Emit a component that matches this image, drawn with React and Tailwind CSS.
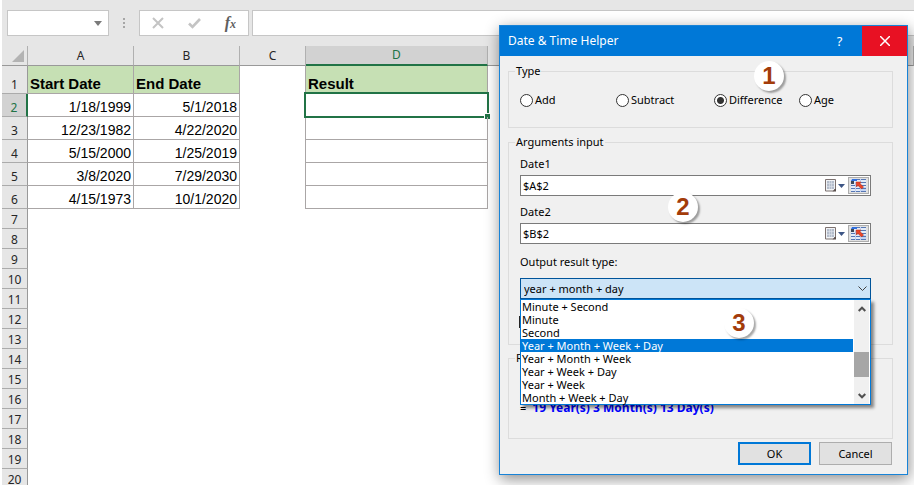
import { useState } from 'react';
import clsx from 'clsx';

const START_ROWS = [
    { start: '1/18/1999', end: '5/1/2018' },
    { start: '12/23/1982', end: '4/22/2020' },
    { start: '5/15/2000', end: '1/25/2019' },
    { start: '3/8/2020', end: '7/29/2030' },
    { start: '4/15/1973', end: '10/1/2020' },
];

const EMPTY_ROWS = [7, 8, 9, 10, 11, 12, 13, 14, 15, 16, 17, 18, 19, 20];

const TYPES = ['Add', 'Subtract', 'Difference', 'Age'];

const OUTPUT_TYPES = [
    'Minute + Second',
    'Minute',
    'Second',
    'Year + Month + Week + Day',
    'Year + Month + Week',
    'Year + Week + Day',
    'Year + Week',
    'Month + Week + Day',
];

const FormulaBar = () => (
    <div className="flex h-[46px] shrink-0 bg-[#e6e6e6] pt-[10px] pl-[5px]">
        <button aria-label="Name box" className="flex h-[26px] w-[102px] items-center justify-end border border-[#c6c6c6] bg-white pr-[6px]">
            <svg width="8" height="5" viewBox="0 0 8 5"><path d="M0 0h8L4 5z" fill="#7a7a7a" /></svg>
        </button>
        <div className="flex h-[26px] w-[30px] items-center justify-center">
            <svg width="2" height="10" viewBox="0 0 2 10" fill="#a6a6a6">
                <path d="M0 0h2v2H0zM0 4h2v2H0zM0 8h2v2H0z" />
            </svg>
        </div>
        <div className="flex h-[26px] w-[110px] items-center justify-between border border-[#c6c6c6] bg-white px-3">
            <button aria-label="Cancel entry">
                <svg width="12" height="12" viewBox="0 0 12 12" fill="none" stroke="#c4c4c4" strokeWidth="2">
                    <path d="M1 1l10 10M11 1L1 11" />
                </svg>
            </button>
            <button aria-label="Enter">
                <svg width="13" height="12" viewBox="0 0 13 12" fill="none" stroke="#c4c4c4" strokeWidth="2.600">
                    <path d="M1 6.500l3.500 3.500L12 2" />
                </svg>
            </button>
            <button className="font-['Liberation_Serif',serif] text-[16px] leading-4 font-bold text-[#5f5f5f] italic">
                f<span className="text-[12px]">x</span>
            </button>
        </div>
        <input aria-label="Formula" className="ml-[3px] h-[26px] min-w-0 flex-1 border border-r-0 border-[#c6c6c6] bg-white px-2 outline-none" />
    </div>
);

const RowHeader = ({ n, active }) => (
    <th
        scope="row"
        className={clsx(
            'border-b p-0 text-center align-bottom text-[12px] leading-4 font-normal',
            active
                ? 'border-r-2 border-r-[#217346] border-b-[#ababab] bg-[#d2d2d2] text-[#217346]'
                : 'border-r border-r-[#999999] border-b-[#ababab] bg-[#e6e6e6] text-[#262626]'
        )}
    >
        {n}
    </th>
);

const ColumnHeader = ({ name, active }) => (
    <th
        scope="col"
        className={clsx(
            'border-r border-r-[#b0b0b0] p-0 text-center text-[12px] leading-[18px] font-normal',
            active ? 'border-b-2 border-b-[#217346] bg-[#d2d2d2] text-[#217346]' : 'border-b border-b-[#999999] text-[#262626]'
        )}
    >
        {name}
    </th>
);

const Sheet = () => {
    const line = 'border-r border-b border-[#aaa6a6]';
    const date = 'px-[2px] py-0 text-right align-bottom text-[14px] leading-[18px]';
    const title = 'bg-[#c6e0b4] px-[2px] py-0 text-left align-bottom font-bold leading-[18px]';

    return (
        <table className="w-full table-fixed border-separate border-spacing-0 font-['Liberation_Sans',Arial,sans-serif] text-[15px] text-black">
            <colgroup>
                <col className="w-[26px]" />
                <col className="w-[106px]" />
                <col className="w-[106px]" />
                <col className="w-[66px]" />
                <col className="w-[182px]" />
                <col />
            </colgroup>
            <thead className="bg-[#e6e6e6] font-['Noto_Sans',sans-serif]">
                <tr className="h-5">
                    <td className="border-r border-b border-r-[#b0b0b0] border-b-[#999999] p-0 align-bottom">
                        <svg className="mb-[3px] ml-[10px] block" width="12" height="12" viewBox="0 0 12 12">
                            <path d="M12 0v12H0z" fill="#b3b3b3" />
                        </svg>
                    </td>
                    <ColumnHeader name="A" />
                    <ColumnHeader name="B" />
                    <ColumnHeader name="C" />
                    <ColumnHeader name="D" active />
                    <ColumnHeader name="" />
                </tr>
            </thead>
            <tbody className="[&_th]:font-['Noto_Sans',sans-serif]">
                <tr className="h-7">
                    <RowHeader n={1} />
                    <td className={clsx(line, title)}>Start Date</td>
                    <td className={clsx(line, title)}>End Date</td>
                    <td className="border-r border-[#aaa6a6] p-0" />
                    <td className={clsx(line, title)}>Result</td>
                    <td className="p-0" />
                </tr>
                {START_ROWS.map((row, i) => (
                    <tr key={row.start} className="h-[23px]">
                        <RowHeader n={i + 2} active={i === 0} />
                        <td className={clsx(line, date)}>{row.start}</td>
                        <td className={clsx(line, date)}>{row.end}</td>
                        <td className="border-r border-[#aaa6a6] p-0" />
                        <td className={clsx(line, 'relative p-0')}>
                            {/* selection frame of the active cell */}
                            {i === 0 && (
                                <div className="absolute -inset-x-[2px] -top-[2px] -bottom-[2px] border-2 border-[#217346]">
                                    <div className="absolute -right-[3px] -bottom-[3px] size-[6px] border-t border-l border-white bg-[#217346]" />
                                </div>
                            )}
                        </td>
                        <td className="p-0" />
                    </tr>
                ))}
                {EMPTY_ROWS.map((n) => (
                    <tr key={n} className="h-5">
                        <RowHeader n={n} />
                        <td colSpan={5} className="p-0" />
                    </tr>
                ))}
            </tbody>
        </table>
    );
};

const CalendarIcon = () => (
    <svg width="12" height="13" viewBox="0 0 12 13">
        <path d="M.5.5h10v9l-2 2.500h-8z" fill="#f1f3f6" stroke="#7d7270" />
        <path d="M11 9v3.500H7.500z" fill="#5a4f4d" />
        <path d="M2 2h7v8H2z" fill="#b4bdcb" />
        <path d="M4.500 2v8M6.500 2v8M2 4.500h7M2 7.500h7" stroke="#dfe4ec" strokeWidth=".6" />
    </svg>
);

const RangeIcon = () => (
    <svg width="15" height="13" viewBox="0 0 15 13">
        <path d="M0 0h15v13H0z" fill="#e3ebf8" />
        <path d="M9 8h6v5H9z" fill="#c3d2f2" />
        <path d="M6 .5h9M0 6.500h15M0 9.500h15M0 12.500h15M10 3.500h5" stroke="#5577b4" />
        <path d="M4.500 4v9M9.500 0v13" stroke="#c3d2f2" />
        <path d="M1 0h5v2H0z" fill="#2f6fe0" />
        <path d="M0 2h3v3H0z" fill="#3c4858" />
        <path d="M5 3h5L9 4.500 12.500 8 10.500 10 7 6.500 5.500 8z" fill="#ea4629" stroke="#b3260f" strokeWidth=".5" />
    </svg>
);

const DateField = ({ id, label, value, onChange }) => (
    <div>
        <label htmlFor={id} className="block leading-4">{label}</label>
        <div className="mt-[3px] flex h-[21px] items-center border border-[#7a7a7a] bg-white">
            <input id={id} value={value} onChange={onChange} className="h-full min-w-0 flex-1 bg-transparent px-[2px] outline-none" />
            <button aria-label={`Pick ${label}`} className="flex items-center gap-px">
                <CalendarIcon />
                <svg width="7" height="4" viewBox="0 0 7 4"><path d="M0 0h7L3.500 4z" fill="#3d5585" /></svg>
            </button>
            <button aria-label={`Select range for ${label}`} className="mr-[1px] ml-[3px] flex h-[17px] w-[21px] items-center justify-center border border-[#adadad] bg-[#e1e1e1]">
                <RangeIcon />
            </button>
        </div>
    </div>
);

const OptionList = ({ selected, onSelect }) => (
    <div className="absolute top-full left-0 z-10 flex h-[106px] w-full border border-[#0078d7] bg-white shadow-[3px_3px_3px_rgba(0,0,0,0.45)]">
        <ul role="listbox" aria-label="Output result types" className="flex-1">
            {OUTPUT_TYPES.map((type) => (
                <li
                    key={type}
                    role="option"
                    aria-selected={type === selected}
                    onClick={() => onSelect(type)}
                    className={clsx('h-[13px] pl-px leading-[13px]', type === selected && 'bg-[#0078d7] text-white')}
                >
                    {type}
                </li>
            ))}
        </ul>
        <div className="ml-px flex w-[15px] flex-col items-center bg-[#f0f0f0]">
            <svg className="mt-[6px]" width="8" height="6" viewBox="0 0 8 6" fill="none" stroke="#505050" strokeWidth="2">
                <path d="M.7 5L4 1.700 7.300 5" />
            </svg>
            <div className="mt-10 h-[25px] w-full bg-[#a6a6a6]" />
            <svg className="mt-4" width="8" height="6" viewBox="0 0 8 6" fill="none" stroke="#505050" strokeWidth="2">
                <path d="M.7 1L4 4.300 7.300 1" />
            </svg>
        </div>
        <div className="w-px" />
    </div>
);

const StepBadge = ({ n, className }) => (
    <div
        className={clsx(
            "absolute z-20 flex size-[30px] items-center justify-center rounded-full bg-white font-['Liberation_Sans',Arial,sans-serif] text-[24px] leading-6 font-bold text-[#a33c0a] shadow-[2px_2px_2px_rgba(0,0,0,0.35)]",
            className
        )}
    >
        {n}
    </div>
);

const DateTimeHelper = () => {
    const [type, setType] = useState('Difference');
    const [date1, setDate1] = useState('$A$2');
    const [date2, setDate2] = useState('$B$2');
    const [output, setOutput] = useState('Year + Month + Week + Day');

    return (
        <div
            role="dialog"
            aria-label="Date & Time Helper"
            className="absolute top-[25px] right-[6px] w-[409px] border border-[#1883d7] bg-[#f0f0f0] font-['Noto_Sans',sans-serif] text-[11px] leading-4 text-black shadow-[1px_4px_14px_rgba(0,0,0,0.45)]"
        >
            <div className="flex h-[30px] items-center bg-[#0078d7] pl-2 text-[12px] text-white">
                <span className="flex-1">Date &amp; Time Helper</span>
                <button className="h-full w-[45px] text-[13px]">?</button>
                <button aria-label="Close" className="flex h-full w-[45px] items-center justify-center bg-[#e81123]">
                    <svg width="10" height="10" viewBox="0 0 10 10" stroke="#fff" strokeWidth="1.500"><path d="M0 0l10 10M10 0L0 10" /></svg>
                </button>
            </div>

            <div className="flex flex-col pt-[7px] pr-[14px] pb-[9px] pl-2">
                <fieldset className="h-[65px] border border-[#dcdcdc] px-[11px]">
                    <legend className="-ml-[5px] px-px">Type</legend>
                    <div className="grid grid-cols-[96px_98px_85px_1fr] pt-[13px]">
                        {TYPES.map((name) => (
                            <label key={name} className="flex items-center gap-[2px]">
                                <input
                                    type="radio"
                                    name="type"
                                    checked={type === name}
                                    onChange={() => setType(name)}
                                    className="size-[13px] appearance-none rounded-full border border-[#333333] bg-white checked:bg-[radial-gradient(circle,#333_3px,#fff_4px)]"
                                />
                                {name}
                            </label>
                        ))}
                    </div>
                </fieldset>

                <fieldset className="mt-[6px] h-[211px] border border-[#dcdcdc] pr-[21px] pl-[11px]">
                    <legend className="-ml-[5px] px-px">Arguments input</legend>
                    <div className="flex flex-col gap-2 pt-[6px]">
                        <DateField id="date1" label="Date1" value={date1} onChange={(e) => setDate1(e.target.value)} />
                        <DateField id="date2" label="Date2" value={date2} onChange={(e) => setDate2(e.target.value)} />
                    </div>
                    <label htmlFor="output" className="mt-[10px] block">Output result type:</label>
                    <div className="relative mt-2">
                        <select id="output" className="block h-[21px] w-full appearance-none border border-[#00549a] bg-[#cce4f7] px-[3px] outline-none">
                            <option>year + month + day</option>
                        </select>
                        <svg className="pointer-events-none absolute top-2 right-1" width="9" height="6" viewBox="0 0 9 6" fill="none" stroke="#404040">
                            <path d="M.5 .5l4 4 4-4" />
                        </svg>
                        <OptionList selected={output} onSelect={setOutput} />
                    </div>
                    {/* edge of the control that the open list covers */}
                    <div className="mt-[17px] -ml-px h-3 w-[2px] bg-[#262626]" />
                </fieldset>

                <fieldset className="mt-[5px] h-[89px] border border-[#dcdcdc] px-[11px]">
                    <legend className="-ml-[5px] px-px">Result</legend>
                    <output className="flex gap-[6px] pt-[34px]">
                        <span>=</span>
                        <b className="text-[12px] text-[#0000ff]">19 Year(s) 3 Month(s) 13 Day(s)</b>
                    </output>
                </fieldset>

                <div className="mt-[3px] mr-px flex justify-end gap-2">
                    <button className="h-[23px] w-[73px] border-2 border-[#0078d7] bg-[#e1e1e1]">OK</button>
                    <button className="h-[23px] w-[73px] border border-[#adadad] bg-[#e1e1e1]">Cancel</button>
                </div>
            </div>

            <StepBadge n={1} className="top-[35px] left-[254px]" />
            <StepBadge n={2} className="top-[166px] left-[168px]" />
            <StepBadge n={3} className="top-[282px] left-[224px]" />
        </div>
    );
};

const App = () => (
    <div className="relative flex h-screen flex-col overflow-hidden bg-white pl-[2px]">
        <FormulaBar />
        <Sheet />
        <DateTimeHelper />
    </div>
);

export default App;
